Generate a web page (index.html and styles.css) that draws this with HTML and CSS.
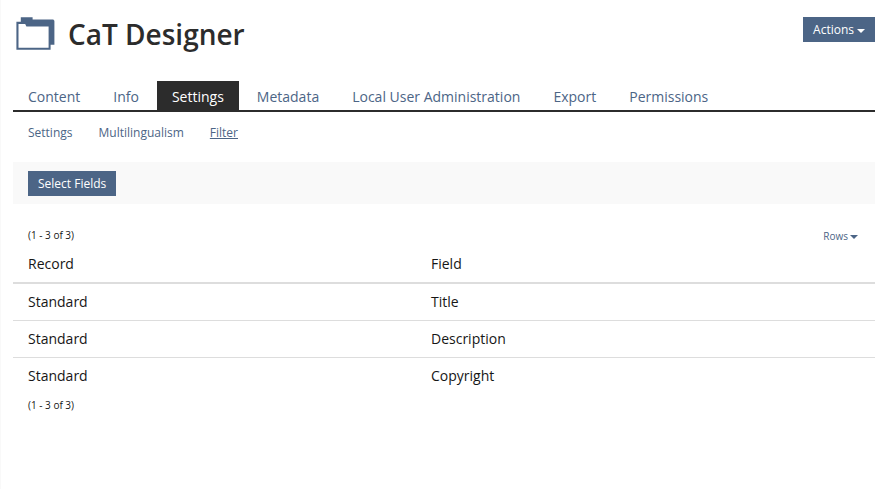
FILE: index.html
```html
<!DOCTYPE html>
<html lang="en">
<head>
<meta charset="utf-8">
<title>CaT Designer</title>
<link rel="stylesheet" href="styles.css">
</head>
<body>
<main class="page">
  <header class="header">
    <svg class="header-icon" width="39" height="34" viewBox="0 0 39 34" aria-hidden="true">
      <path fill="#4c6586" d="M4.8 .2H16.6V2.6H37.3L38.4 3.7V27.7H34.6V32.8H.4V4.8H4.8Z"/>
      <path fill="#fff" d="M2.5 6.9H9.2L10.4 9.6H32.6V30.8H2.5Z"/>
    </svg>
    <h1 class="title">CaT Designer</h1>
    <button class="btn btn-actions">Actions<span class="caret"></span></button>
  </header>
  <nav class="tabs">
    <a class="tab">Content</a>
    <a class="tab">Info</a>
    <a class="tab active">Settings</a>
    <a class="tab">Metadata</a>
    <a class="tab">Local User Administration</a>
    <a class="tab">Export</a>
    <a class="tab">Permissions</a>
  </nav>
  <nav class="subtabs">
    <a>Settings</a>
    <a>Multilingualism</a>
    <a class="current">Filter</a>
  </nav>
  <div class="toolbar"><button class="btn">Select Fields</button></div>
  <div class="table-nav">
    <span>(1 - 3 of 3)</span>
    <a class="rows">Rows<span class="caret"></span></a>
  </div>
  <table class="table">
    <thead><tr><th class="record">Record</th><th>Field</th></tr></thead>
    <tbody>
      <tr><td>Standard</td><td>Title</td></tr>
      <tr><td>Standard</td><td>Description</td></tr>
      <tr><td>Standard</td><td>Copyright</td></tr>
    </tbody>
  </table>
  <div class="table-foot">(1 - 3 of 3)</div>
</main>
</body>
</html>
```
FILE: styles.css
```css
* { box-sizing: border-box; }
body {
  margin: 0;
  font: 14px/20px "Open Sans", sans-serif;
  color: #161616;
  background: #fff;
}
.page {
  height: 489px;
  border-left: 1px solid #f9f9f9;
  padding: 17px 12px 0;
}
.header { display: flex; align-items: flex-start; height: 64px; }
.header-icon { margin-left: 3px; flex: none; }
.title {
  margin: 0 0 0 13px;
  font-size: 28px;
  line-height: 34px;
  font-weight: 600;
  color: #2c2c2c;
}
.btn {
  height: 25px;
  padding: 0 10px;
  border: 0;
  font: 12px/25px "Open Sans", sans-serif;
  color: #fff;
  background: #4c6586;
}
.btn-actions { margin-left: auto; }
.caret {
  display: inline-block;
  margin-left: 3px;
  vertical-align: middle;
  border-top: 4px solid currentColor;
  border-left: 4px solid transparent;
  border-right: 4px solid transparent;
}
.tabs {
  display: flex;
  gap: 3px;
  height: 31px;
  border-bottom: 2px solid #2c2c2c;
}
.tab { padding: 0 15px; line-height: 31px; color: #4c6586; }
.tab.active { color: #fff; background: #2c2c2c; }
.subtabs {
  display: flex;
  gap: 26px;
  height: 50px;
  padding: 12px 15px 0;
  font-size: 12px;
  line-height: 17px;
  color: #4c6586;
}
.current { text-decoration: underline; }
.toolbar {
  display: flex;
  align-items: center;
  height: 42px;
  padding: 0 15px;
  background: #f9f9f9;
}
.toolbar .btn { margin-top: 1px; }
.table-nav {
  display: flex;
  justify-content: space-between;
  height: 42px;
  padding: 24px 17px 0 15px;
  font-size: 10px;
  line-height: 14px;
}
.rows { padding-top: 1px; color: #4c6586; }
.rows .caret { margin-left: 2px; }
.table { width: 100%; border-collapse: separate; border-spacing: 0; table-layout: fixed; }
.table th, .table td { padding: 0 15px; text-align: left; font-weight: 400; }
.table th { height: 38px; border-bottom: 2px solid #ddd; }
.table td { height: 37px; border-bottom: 1px solid #ddd; }
.table tr:last-child td { border-bottom-color: transparent; }
.record { width: 403px; }
.table-foot { padding: 3px 15px 0; font-size: 10px; line-height: 14px; }
```
